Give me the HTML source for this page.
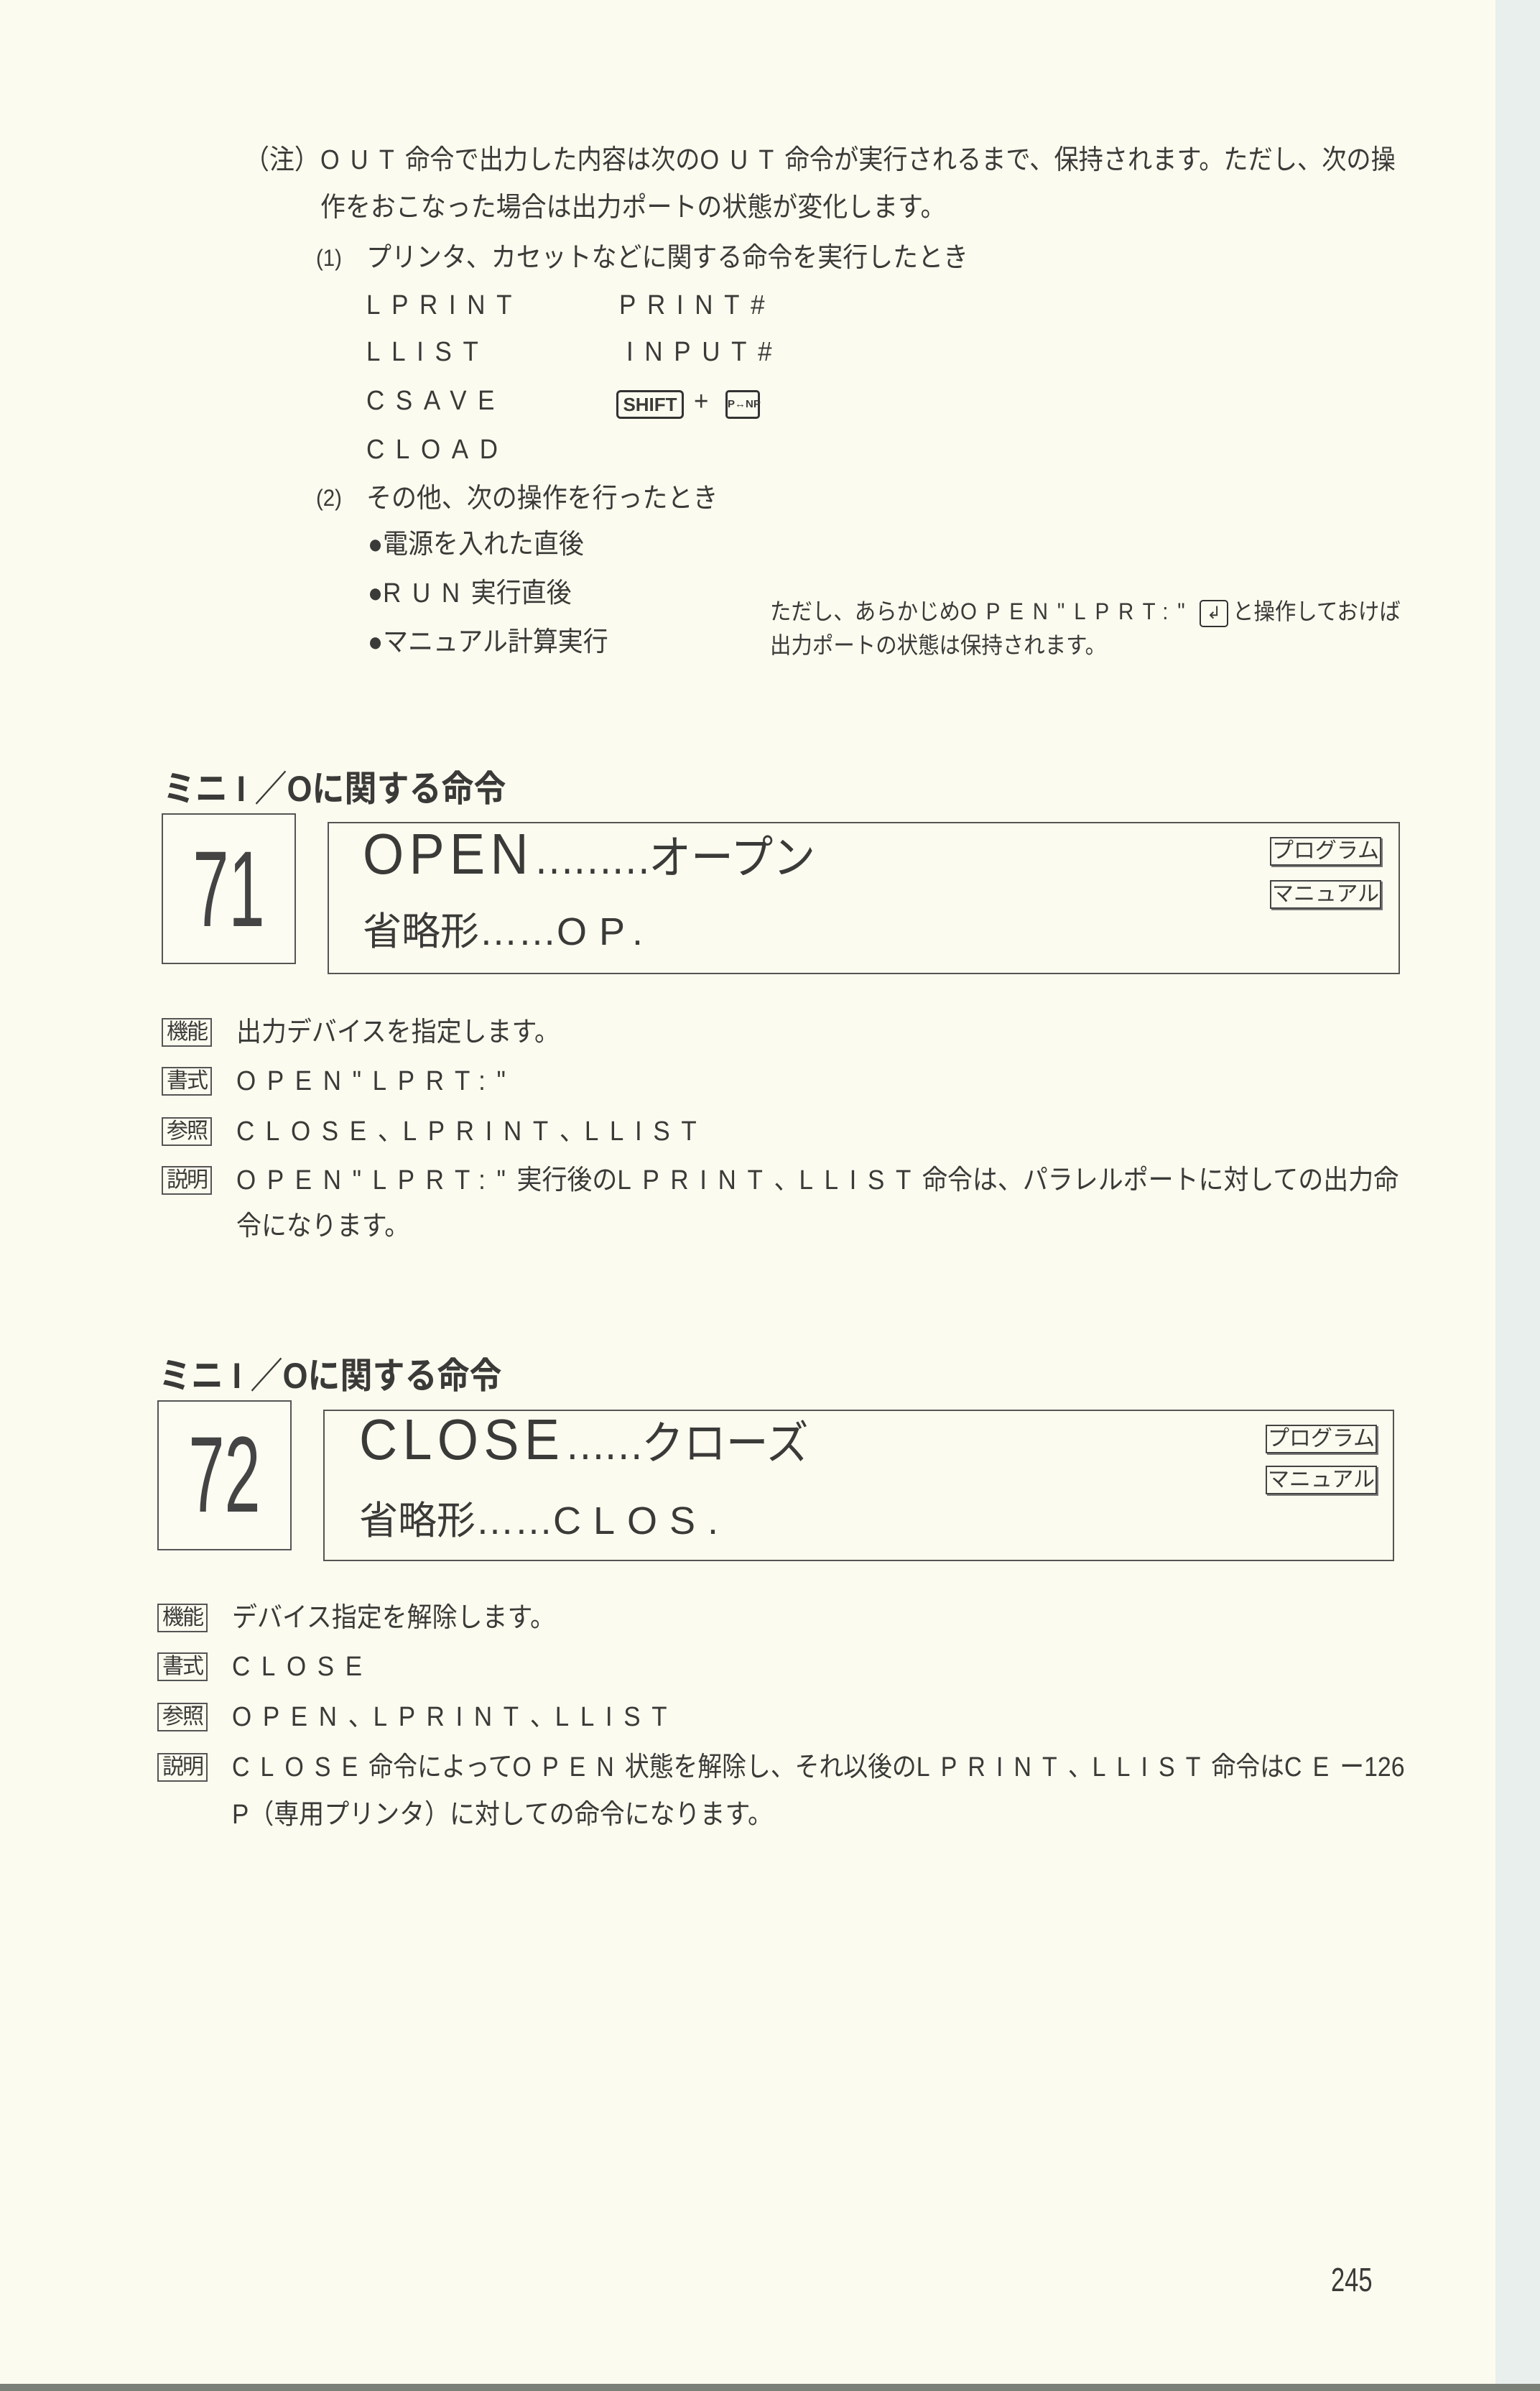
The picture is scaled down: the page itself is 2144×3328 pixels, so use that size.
<!DOCTYPE html>
<html><head><meta charset="utf-8">
<style>
html,body{margin:0;padding:0}
body{width:2144px;height:3328px;position:relative;overflow:hidden;background:#fcfbef;color:#3a3a38;font-family:"Liberation Sans","Noto Sans CJK JP",sans-serif}
.strip{position:absolute;left:2082px;top:0;width:62px;height:3328px;background:#e9efed}
.bot{position:absolute;left:0;top:3318px;width:2144px;height:10px;background:#7a7f78}
.l{position:absolute;white-space:nowrap;line-height:1;font-size:38px;transform-origin:0 50%;transform:scaleX(.92)}
.s{font-size:32px}
.lat{letter-spacing:17px;font-family:"Liberation Sans",sans-serif}
.s .lat{letter-spacing:14px}
.head{position:absolute;white-space:nowrap;line-height:1;font-size:50px;font-weight:bold;transform-origin:0 50%;transform:scaleX(.9)}
.num{position:absolute;border:2px solid #555;background:#fdfcf2}
.num span{position:absolute;left:0;right:0;text-align:center;font-size:150px;line-height:1;transform:scaleX(.6);font-family:"Liberation Sans",sans-serif;color:#444}
.box{position:absolute;border:2px solid #555}
.title{position:absolute;white-space:nowrap;line-height:1;font-size:80px;letter-spacing:8px;transform-origin:0 50%;transform:scaleX(.92)}
.title .d{font-size:62px;letter-spacing:-4px}
.title .k{font-size:64px;letter-spacing:0}
.abbr{position:absolute;white-space:nowrap;line-height:1;font-size:54px;transform-origin:0 50%}
.tag{position:absolute;border:2px solid #444;font-size:30px;line-height:36px;text-align:center;white-space:nowrap;box-shadow:2px 2px 0 #777}
.lab{position:absolute;width:66px;height:36px;border:2px solid #555;font-size:30px;line-height:36px;text-align:center;white-space:nowrap;letter-spacing:-2px}
</style></head><body>
<div class="strip"></div>
<div class="bot"></div>

<div class="l" style="left:340px;top:204px">（注）</div>
<div class="l" style="left:446px;top:204px;transform:scaleX(.9)"><span class="lat">OUT</span>命令で出力した内容は次の<span class="lat">OUT</span>命令が実行されるまで、保持されます。ただし、次の操</div>
<div class="l" style="left:446px;top:270px">作をおこなった場合は出力ポートの状態が変化します。</div>
<div class="l s" style="left:440px;top:343px">(1)</div>
<div class="l" style="left:510px;top:340px">プリンタ、カセットなどに関する命令を実行したとき</div>
<div class="l lat" style="left:510px;top:406px">LPRINT</div>
<div class="l lat" style="left:862px;top:406px">PRINT#</div>
<div class="l lat" style="left:510px;top:471px">LLIST</div>
<div class="l lat" style="left:872px;top:471px">INPUT#</div>
<div class="l lat" style="left:510px;top:539px">CSAVE</div>
<div style="position:absolute;left:858px;top:543px;width:88px;height:34px;border:3px solid #333;border-radius:6px;font-size:26px;font-weight:bold;line-height:34px;text-align:center">SHIFT</div>
<div class="l" style="left:966px;top:540px">+</div>
<div style="position:absolute;left:1010px;top:543px;width:42px;height:34px;border:3px solid #333;border-radius:5px;font-size:15px;font-weight:bold;line-height:34px;text-align:center">P↔NP</div>
<div class="l lat" style="left:510px;top:607px">CLOAD</div>
<div class="l s" style="left:440px;top:677px">(2)</div>
<div class="l" style="left:510px;top:675px">その他、次の操作を行ったとき</div>
<div class="l" style="left:512px;top:739px">●電源を入れた直後</div>
<div class="l" style="left:512px;top:807px">●<span class="lat">RUN</span>実行直後</div>
<div class="l" style="left:512px;top:875px">●マニュアル計算実行</div>
<div class="l s" style="left:1072px;top:835px">ただし、あらかじめ<span class="lat">OPEN"LPRT:"</span></div>
<div style="position:absolute;left:1670px;top:835px;width:36px;height:34px;border:2px solid #333;border-radius:5px;font-size:24px;line-height:34px;text-align:center">↲</div>
<div class="l s" style="left:1716px;top:835px">と操作しておけば</div>
<div class="l s" style="left:1072px;top:882px">出力ポートの状態は保持されます。</div>

<!-- section 71 -->
<div class="head" style="left:227px;top:1073px">ミニ I ／Oに関する命令</div>
<div class="num" style="left:225px;top:1132px;width:183px;height:206px"><span style="top:28px">71</span></div>
<div class="box" style="left:456px;top:1144px;width:1489px;height:208px"></div>
<div class="title" style="left:505px;top:1149px">OPEN<span class="d">………</span><span class="k">オープン</span></div>
<div class="abbr" style="left:505px;top:1270px">省略形……<span class="lat">OP.</span></div>
<div class="tag" style="left:1768px;top:1165px;width:151px">プログラム</div>
<div class="tag" style="left:1768px;top:1225px;width:151px">マニュアル</div>

<div class="lab" style="left:225px;top:1417px">機能</div>
<div class="l" style="left:329px;top:1418px">出力デバイスを指定します。</div>
<div class="lab" style="left:225px;top:1485px">書式</div>
<div class="l lat" style="left:329px;top:1486px">OPEN"LPRT:"</div>
<div class="lab" style="left:225px;top:1555px">参照</div>
<div class="l" style="left:329px;top:1556px"><span class="lat">CLOSE</span>、<span class="lat">LPRINT</span>、<span class="lat">LLIST</span></div>
<div class="lab" style="left:225px;top:1623px">説明</div>
<div class="l" style="left:329px;top:1624px"><span class="lat">OPEN"LPRT:"</span>実行後の<span class="lat">LPRINT</span>、<span class="lat">LLIST</span>命令は、パラレルポートに対しての出力命</div>
<div class="l" style="left:329px;top:1688px">令になります。</div>

<!-- section 72 -->
<div class="head" style="left:221px;top:1890px">ミニ I ／Oに関する命令</div>
<div class="num" style="left:219px;top:1949px;width:183px;height:205px"><span style="top:26px">72</span></div>
<div class="box" style="left:450px;top:1962px;width:1487px;height:207px"></div>
<div class="title" style="left:500px;top:1964px">CLOSE<span class="d">……</span><span class="k">クローズ</span></div>
<div class="abbr" style="left:500px;top:2090px">省略形……<span class="lat">CLOS.</span></div>
<div class="tag" style="left:1762px;top:1983px;width:151px">プログラム</div>
<div class="tag" style="left:1762px;top:2040px;width:151px">マニュアル</div>

<div class="lab" style="left:219px;top:2232px">機能</div>
<div class="l" style="left:323px;top:2233px">デバイス指定を解除します。</div>
<div class="lab" style="left:219px;top:2300px">書式</div>
<div class="l lat" style="left:323px;top:2301px">CLOSE</div>
<div class="lab" style="left:219px;top:2370px">参照</div>
<div class="l" style="left:323px;top:2371px"><span class="lat">OPEN</span>、<span class="lat">LPRINT</span>、<span class="lat">LLIST</span></div>
<div class="lab" style="left:219px;top:2440px">説明</div>
<div class="l" style="left:323px;top:2441px;transform:scaleX(.89)"><span class="lat">CLOSE</span>命令によって<span class="lat">OPEN</span>状態を解除し、それ以後の<span class="lat">LPRINT</span>、<span class="lat">LLIST</span>命令は<span class="lat">CE</span>ー126</div>
<div class="l" style="left:323px;top:2507px">P（専用プリンタ）に対しての命令になります。</div>

<div class="l" style="left:1853px;top:3150px;font-size:46px;transform:scaleX(.75)">245</div>
</body></html>
